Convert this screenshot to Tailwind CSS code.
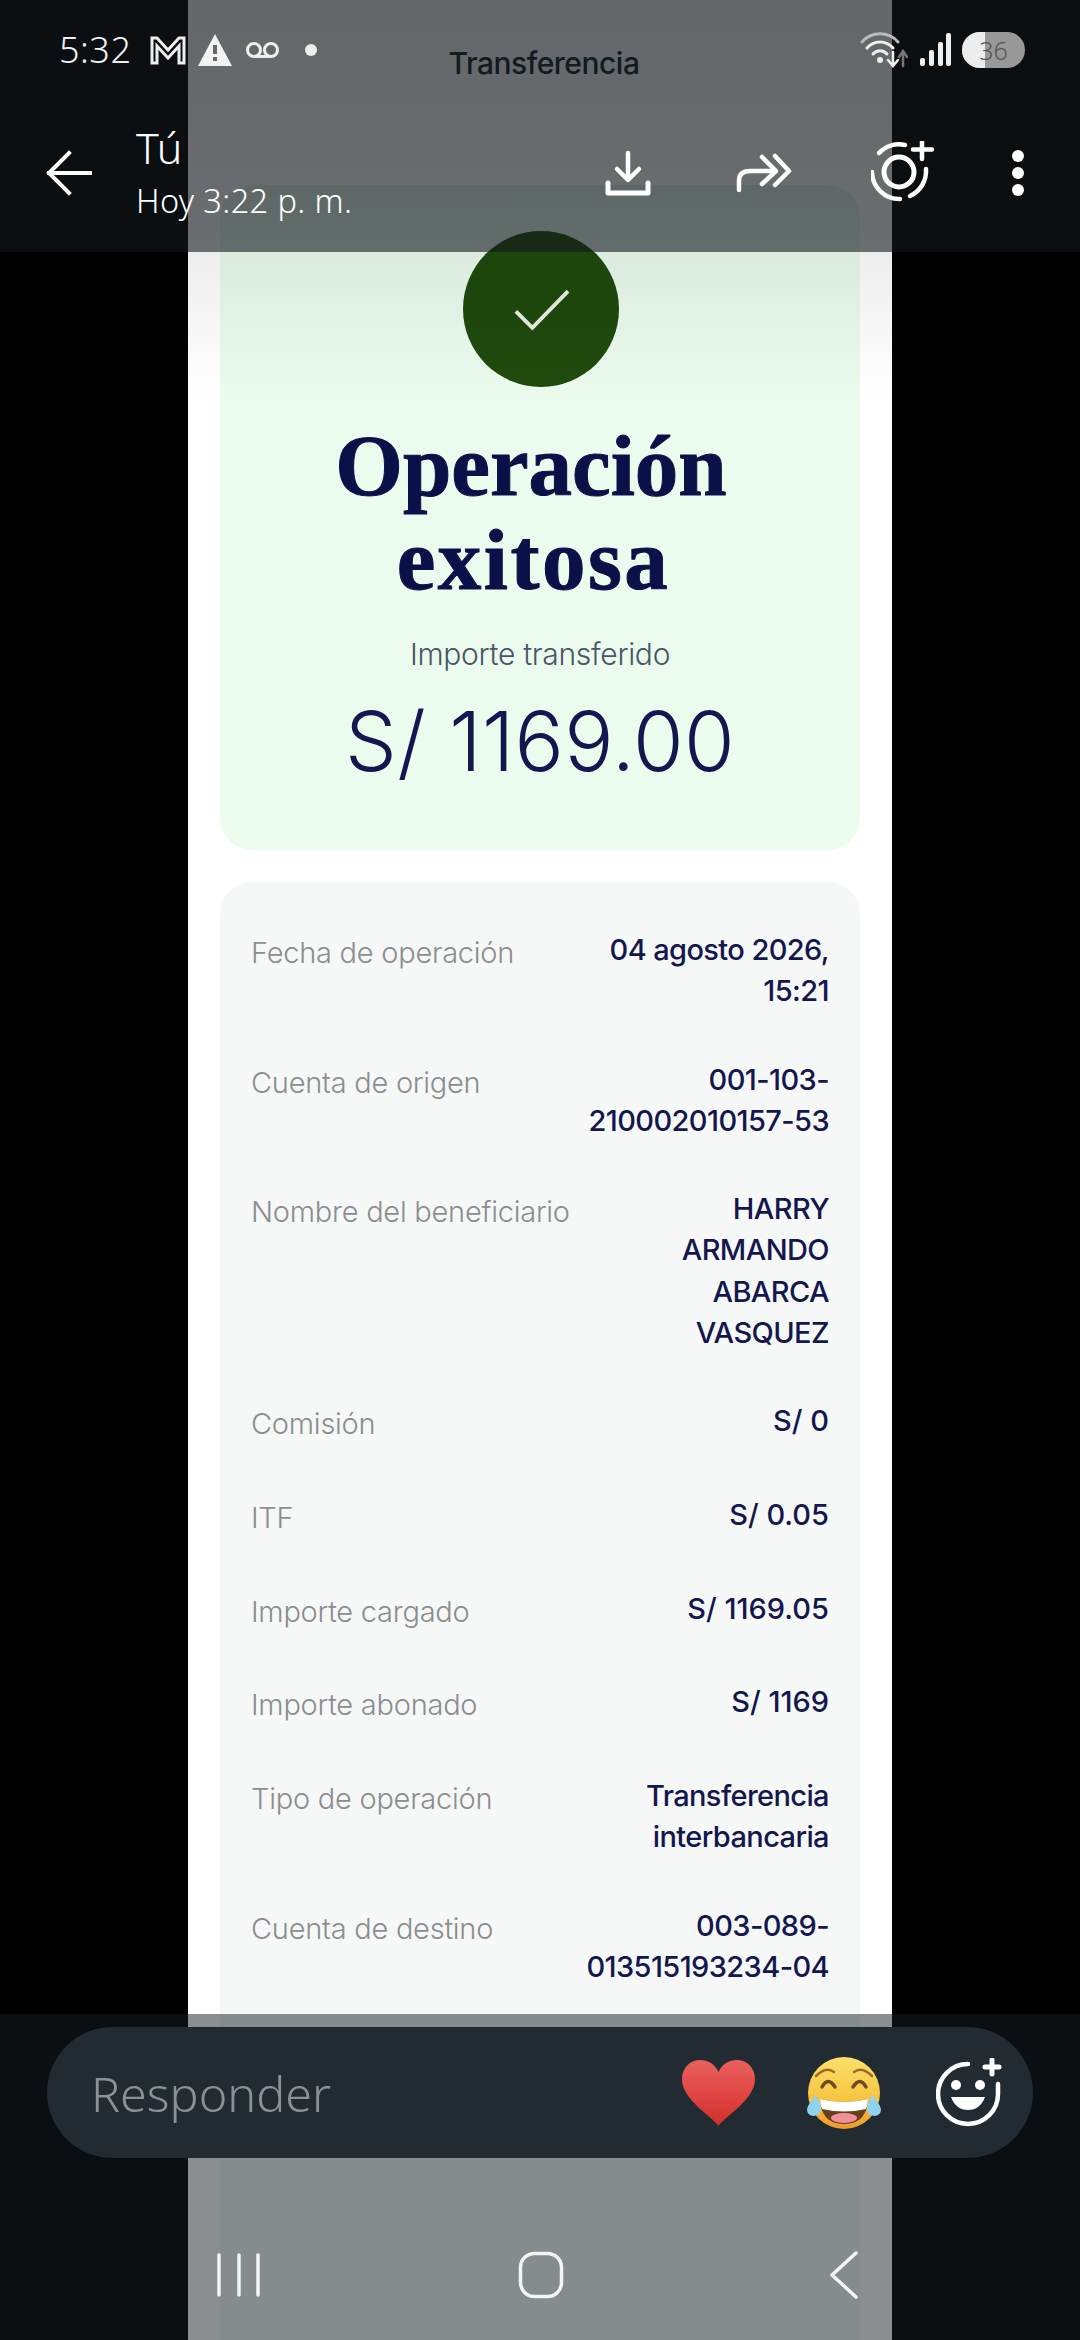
<!DOCTYPE html>
<html lang="es">
<head>
<meta charset="utf-8">
<script src="https://cdn.jsdelivr.net/npm/@tailwindcss/browser@4"></script>
</head>
<body class="bg-black">
<div class="relative w-[1080px] h-[2340px] overflow-hidden bg-black font-['Inter',sans-serif]">

  <!-- Photographed receipt -->
  <main class="relative w-[704px] h-[2340px] ml-[188px] bg-white overflow-hidden flex flex-col">
    <div class="h-[126px] pt-[44px] text-center text-[30px] leading-[38px] font-medium text-[#1c2124] tracking-[-0.5px] pl-[8px]">Transferencia</div>
    <section class="mx-[32px] mt-[59px] h-[665px] rounded-[32px] bg-linear-to-b from-[#e4f3e6] to-[#ebfcef] to-[10%] flex flex-col items-center">
      <div class="mt-[46px] ml-[2px] w-[156px] h-[156px] rounded-full bg-[#1f4a0d] flex items-center justify-center">
        <svg class="ml-[2px]" width="56" height="43" viewBox="0 0 58 44" fill="none"><path d="M2 24 L19 41 L56 3" stroke="#e8f3e2" stroke-width="4"/></svg>
      </div>
      <h1 class="mt-[32px] text-center font-['Liberation_Serif',serif] font-bold text-[87px] leading-[94px] text-[#0a1148] pr-[18px] [-webkit-text-stroke:1px_#0a1148]">Operación<br><span class="tracking-[2.5px] pl-[5px]">exitosa</span></h1>
      <p class="mt-[27px] text-[30px] leading-[40px] text-[#4b5565] font-light tracking-[-0.3px]">Importe transferido</p>
      <p class="mt-[21px] text-[82px] leading-[94px] font-light text-[#12184f] tracking-[0.3px]">S/ 1169.00</p>
    </section>
    <section class="mx-[32px] mt-[32px] flex-1 rounded-t-[32px] bg-[#f6f8f8] px-[31px] pt-[47px] flex flex-col gap-[46.7px] text-[29px]">
      <div class="flex justify-between items-start"><span class="leading-[47px] text-[#8b8d8f] font-light tracking-[-0.25px]">Fecha de operación</span><span class="leading-[41.4px] text-right font-medium text-[#14174d] tracking-[-0.6px]">04 agosto 2026,<br>15:21</span></div>
      <div class="flex justify-between items-start"><span class="leading-[47px] text-[#8b8d8f] font-light tracking-[-0.25px]">Cuenta de origen</span><span class="leading-[41.4px] text-right font-medium text-[#14174d] tracking-[-0.6px]">001-103-<br>210002010157-53</span></div>
      <div class="flex justify-between items-start"><span class="leading-[47px] text-[#8b8d8f] font-light tracking-[-0.25px]">Nombre del beneficiario</span><span class="leading-[41.4px] text-right font-medium text-[#14174d] tracking-[-0.6px]">HARRY<br>ARMANDO<br>ABARCA<br>VASQUEZ</span></div>
      <div class="flex justify-between items-start"><span class="leading-[47px] text-[#8b8d8f] font-light tracking-[-0.25px]">Comisión</span><span class="leading-[41.4px] text-right font-medium text-[#14174d]">S/ 0</span></div>
      <div class="flex justify-between items-start"><span class="leading-[47px] text-[#8b8d8f] font-light tracking-[-0.25px]">ITF</span><span class="leading-[41.4px] text-right font-medium text-[#14174d]">S/ 0.05</span></div>
      <div class="flex justify-between items-start"><span class="leading-[47px] text-[#8b8d8f] font-light tracking-[-0.25px]">Importe cargado</span><span class="leading-[41.4px] text-right font-medium text-[#14174d]">S/ 1169.05</span></div>
      <div class="flex justify-between items-start"><span class="leading-[47px] text-[#8b8d8f] font-light tracking-[-0.25px]">Importe abonado</span><span class="leading-[41.4px] text-right font-medium text-[#14174d]">S/ 1169</span></div>
      <div class="flex justify-between items-start"><span class="leading-[47px] text-[#8b8d8f] font-light tracking-[-0.25px]">Tipo de operación</span><span class="leading-[41.4px] text-right font-medium text-[#14174d] tracking-[-0.6px]">Transferencia<br>interbancaria</span></div>
      <div class="flex justify-between items-start"><span class="leading-[47px] text-[#8b8d8f] font-light tracking-[-0.25px]">Cuenta de destino</span><span class="leading-[41.4px] text-right font-medium text-[#14174d] tracking-[-0.6px]">003-089-<br>013515193234-04</span></div>
    </section>
    <div class="absolute left-0 top-0 w-full h-[400px] bg-linear-to-b from-black/14 via-black/7 via-[63%] to-transparent"></div>
  </main>

  <!-- Top bars -->
  <header class="absolute left-0 top-0 w-full h-[252px] bg-[#12191e]/60 text-white font-['Noto_Sans',sans-serif] flex flex-col">
    <div class="h-[100px] flex items-center pl-[59px] pr-[55px]">
      <span class="text-[36px] leading-[100px] font-light text-[#f0f0f0] w-[91px] tracking-[0.5px]">5:32</span>
      <svg class="w-[36px] h-[30px]" viewBox="0 0 36 30" fill="none" stroke="#eee" stroke-width="3"><path d="M2 28 V3 H7 L18 15 L29 3 H34 V28 H29 V11 L18 23 L7 11 V28 Z"/></svg>
      <svg class="ml-[12px] w-[34px] h-[32px]" viewBox="0 0 34 32"><path fill-rule="evenodd" fill="#f2f2f2" d="M17 0 L34 32 H0 Z M15 11 V20 H19 V11 Z M15 23 V27 H19 V23 Z"/></svg>
      <svg class="ml-[13px] w-[35px] h-[18px]" viewBox="0 0 35 18" fill="none" stroke="#eee" stroke-width="3"><circle cx="9" cy="9" r="6.5"/><circle cx="26" cy="9" r="6.5"/><path d="M9 15.5 H26"/></svg>
      <span class="ml-[25px] w-[12px] h-[12px] rounded-full bg-[#eee]"></span>
      <svg class="ml-auto w-[48px] h-[36px]" viewBox="0 0 48 36" fill="none" stroke-linecap="round">
        <path d="M2 10 A 24 24 0 0 1 38 10" stroke="#b9bbbd" stroke-width="3"/>
        <path d="M7 16 A 17 17 0 0 1 33 16" stroke="#eee" stroke-width="3"/>
        <path d="M13 22 A 9 9 0 0 1 27 22" stroke="#eee" stroke-width="3"/>
        <circle cx="20" cy="28" r="3" fill="#eee"/>
        <path d="M33 20 V33 M28 28 L33 34 L38 28" stroke="#eee" stroke-width="2.5"/>
        <path d="M43 34 V20 M39 25 L43 19 L47 25" stroke="#777" stroke-width="2.5"/>
      </svg>
      <svg class="ml-[12px] w-[31px] h-[34px]" viewBox="0 0 31 34" fill="#eee"><rect x="0" y="25" width="5" height="8" rx="2"/><rect x="9" y="17" width="5" height="16" rx="2"/><rect x="18" y="9" width="5" height="24" rx="2"/><rect x="26" y="0" width="5" height="33" rx="2"/></svg>
      <div class="relative ml-[11px] w-[63px] h-[36px] rounded-full overflow-hidden bg-[#989898] flex items-center justify-center">
        <div class="absolute inset-y-0 left-0 w-[23px] bg-[#ededed]"></div>
        <span class="relative text-[25px] leading-[36px] text-[#555] font-light">36</span>
      </div>
    </div>
    <div class="h-[152px] pb-[6px] flex items-center pl-[46px] pr-[56px]">
      <svg class="w-[46px] h-[46px]" viewBox="0 0 46 46" fill="none" stroke="#fff" stroke-width="4" stroke-linecap="square"><path d="M44 23 H3 M23 3 L3 23 L23 43"/></svg>
      <div class="ml-[44px] flex flex-col">
        <span class="text-[43px] leading-[52px] font-light h-[59px] -mt-[4px]">Tú</span>
        <span class="text-[32.5px] leading-[40px] font-light tracking-[0.4px]">Hoy 3:22 p. m.</span>
      </div>
      <svg class="ml-auto w-[46px] h-[46px]" viewBox="0 0 46 46" fill="none" stroke="#fff" stroke-width="4.5" stroke-linecap="round" stroke-linejoin="round"><path d="M23 3 V29 M12 19 L23 30 L34 19"/><path d="M3 33 V43 H43 V33" stroke-width="5"/></svg>
      <svg class="ml-[85px] w-[56px] h-[40px]" viewBox="0 0 56 40" fill="none" stroke="#fff" stroke-width="4.5" stroke-linecap="round" stroke-linejoin="round"><path d="M3 37 V28 Q3 18 14 18 H38 M26 4 L40 18 L26 31"/><path d="M39 3 L53 18 L39 32"/></svg>
      <svg class="ml-[79px] w-[64px] h-[64px]" viewBox="0 2 64 64" fill="none" stroke="#fff" stroke-linecap="round">
        <circle cx="28" cy="33" r="15" stroke-width="5"/>
        <path d="M34 6 A 27.5 27.5 0 0 0 8 14" stroke-width="4.5"/>
        <path d="M1 33 A 27.5 27.5 0 0 0 29 60" stroke-width="4.5"/>
        <path d="M39 57 A 27.5 27.5 0 0 0 55 30" stroke-width="4.5"/>
        <path d="M51 2 V20 M42 10.5 H61" stroke-width="4.5"/>
      </svg>
      <div class="ml-[77px] w-[12px] flex flex-col gap-[5px]">
        <span class="w-[12px] h-[12px] rounded-full bg-white"></span>
        <span class="w-[12px] h-[12px] rounded-full bg-white"></span>
        <span class="w-[12px] h-[12px] rounded-full bg-white"></span>
      </div>
    </div>
  </header>

  <!-- Bottom bar -->
  <footer class="absolute left-0 top-[2014px] w-full h-[326px] bg-[#161e24]/50 pt-[13px] flex flex-col items-center font-['Noto_Sans',sans-serif]">
    <div class="w-[986px] h-[131px] rounded-full bg-[#232b32] flex items-center pl-[44px] pr-[29px]">
      <span class="text-[48.5px] leading-[60px] text-[#8b9297] font-light">Responder</span>
      <svg class="ml-auto w-[73px] h-[66px]" viewBox="0 0 73 66">
        <defs><linearGradient id="heartFill" x1="0" y1="0" x2="0" y2="1"><stop offset="0" stop-color="#e9605f"/><stop offset="0.45" stop-color="#e24a46"/><stop offset="1" stop-color="#cf2f2b"/></linearGradient></defs>
        <path fill="url(#heartFill)" d="M36.5 66 C30 56 0 40 0 19 C0 7 9 0 18 0 C26 0 33 4 36.5 12 C40 4 47 0 55 0 C64 0 73 7 73 19 C73 40 43 56 36.5 66 Z"/>
      </svg>
      <svg class="ml-[51px] w-[76px] h-[74px]" viewBox="0 0 76 74">
        <defs><linearGradient id="faceFill" x1="0" y1="0" x2="0" y2="1"><stop offset="0" stop-color="#fbe06a"/><stop offset="0.6" stop-color="#f7c33f"/><stop offset="1" stop-color="#ee9a2c"/></linearGradient></defs>
        <circle cx="38" cy="37" r="36" fill="url(#faceFill)"/>
        <path d="M10 20 Q20 10 28 16 M66 20 Q56 10 48 16" fill="none" stroke="#9b6a2a" stroke-width="2.5" stroke-linecap="round"/>
        <path d="M16 31 Q22 20 29 31 M47 31 Q54 20 60 31" fill="none" stroke="#6f4a23" stroke-width="3.5" stroke-linecap="round"/>
        <path d="M14 43 Q38 49 62 43 Q61 68 38 68 Q15 68 14 43 Z" fill="#67401a"/>
        <path d="M14 43 Q38 49 62 43 Q62 49 60 53 Q38 58 16 53 Q14 49 14 43 Z" fill="#fff"/>
        <ellipse cx="38" cy="62" rx="13" ry="5" fill="#ee8f9b"/>
        <path d="M10 39 Q2 48 1 53 Q1 60 8 60 Q16 59 15 51 Z M66 39 Q74 48 75 53 Q75 60 68 60 Q60 59 61 51 Z" fill="#8fd3ee"/>
      </svg>
      <svg class="ml-[54px] w-[68px] h-[70px]" viewBox="0 0 68 70" fill="none" stroke="#fff" stroke-linecap="round">
        <path d="M32 6 A 30 30 0 1 0 62 36 V26" stroke-width="4.5"/>
        <path d="M56 2 V16 M49 9 H63" stroke-width="5"/>
        <circle cx="20" cy="27" r="5" fill="#fff" stroke="none"/>
        <circle cx="44" cy="27" r="5" fill="#fff" stroke="none"/>
        <path d="M15 39 H49 Q44 52 32 52 Q20 52 15 39 Z" fill="#fff" stroke="none"/>
      </svg>
    </div>
    <nav class="relative w-full h-[182px]">
      <svg class="absolute left-[217px] top-[95px]" width="43" height="44" viewBox="0 0 43 44" fill="none" stroke="#f4f4f4" stroke-width="3.5" stroke-linecap="round"><path d="M2 2 V42 M22 2 V42 M41 2 V42"/></svg>
      <svg class="absolute left-[518px] top-[93px]" width="46" height="48" viewBox="0 0 46 48" fill="none" stroke="#f4f4f4" stroke-width="3.5"><rect x="2.5" y="2.5" width="41" height="43" rx="14"/></svg>
      <svg class="absolute left-[829px] top-[93px]" width="30" height="48" viewBox="0 0 30 48" fill="none" stroke="#f4f4f4" stroke-width="3.5" stroke-linecap="round" stroke-linejoin="round"><path d="M27 2 L3 24 L27 46"/></svg>
    </nav>
  </footer>
</div>
</body>
</html>
